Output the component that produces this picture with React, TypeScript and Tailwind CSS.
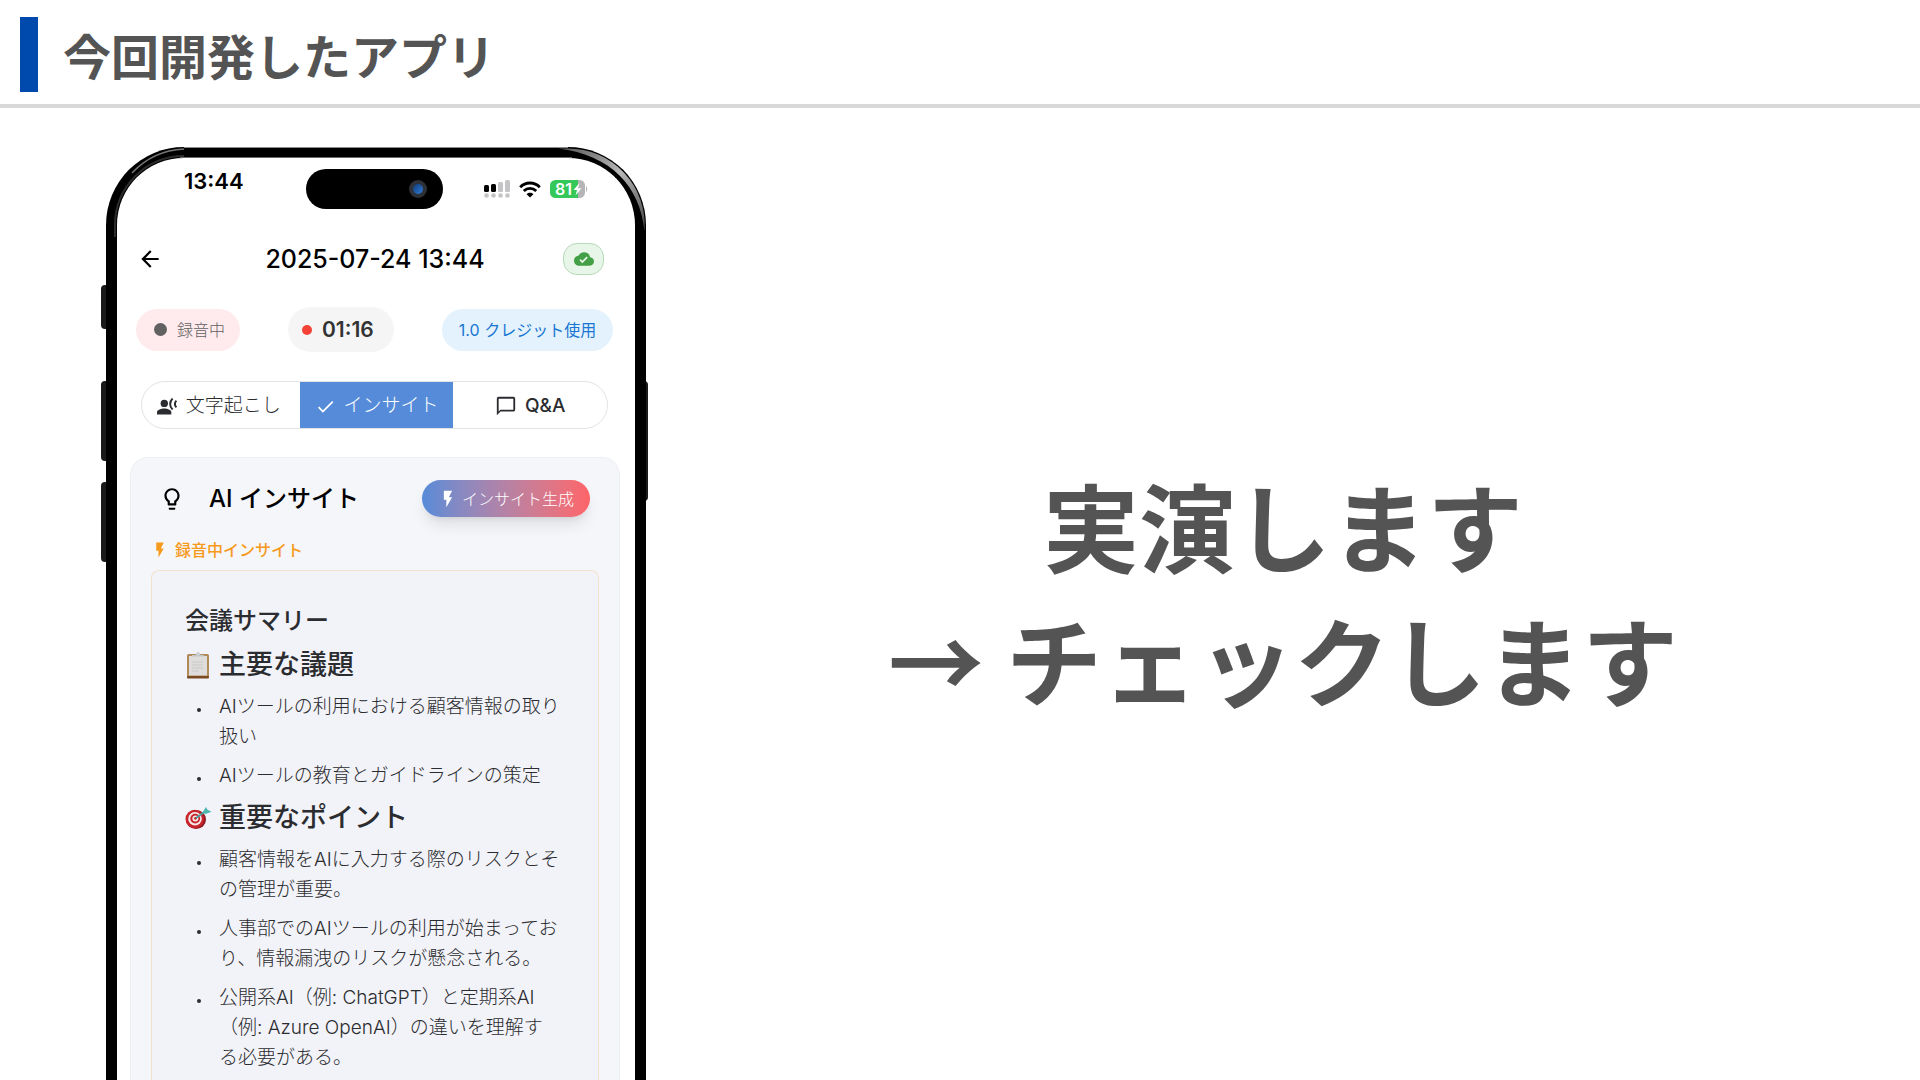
import type { ReactNode } from 'react'
import { MdArrowBack, MdCheck, MdCloudDone, MdFlashOn, MdOutlineChatBubbleOutline, MdOutlineLightbulb } from 'react-icons/md'

const topics = ['AIツールの利用における顧客情報の取り扱い', 'AIツールの教育とガイドラインの策定']

const points = [
  '顧客情報をAIに入力する際のリスクとその管理が重要。',
  '人事部でのAIツールの利用が始まっており、情報漏洩のリスクが懸念される。',
  '公開系AI（例: ChatGPT）と定期系AI（例: Azure OpenAI）の違いを理解する必要がある。',
]

function SignalIcon() {
  return (
    <svg viewBox="0 0 26 18" className="w-[26px] h-[18px]">
      <g fill="#000">
        <rect x="0" y="5" width="5" height="7" rx="1.5" />
        <rect x="7" y="4" width="5" height="8" rx="1.5" />
      </g>
      <g fill="#c4c4c6">
        <rect x="14" y="2" width="5" height="10" rx="1.5" />
        <rect x="21" y="0" width="5" height="12" rx="1.5" />
        <circle cx="2.5" cy="15.5" r="2.3" />
        <circle cx="9.5" cy="15.5" r="2.3" />
        <circle cx="16.5" cy="15.5" r="2.3" />
        <circle cx="23.5" cy="15.5" r="2.3" />
      </g>
    </svg>
  )
}

function WifiIcon() {
  return (
    <svg viewBox="0 0 22 17" className="w-[22px] h-[17px]" fill="none" stroke="#000" strokeWidth="2.8">
      <path d="M1.2 6.2C6.6 .6 15.4 .6 20.8 6.2" />
      <path d="M4.8 10C8.3 6.4 13.7 6.4 17.2 10" />
      <path d="M11 16.6 7.6 13.2C9.5 11.3 12.5 11.3 14.4 13.2Z" fill="#000" stroke="none" />
    </svg>
  )
}

function BatteryIcon() {
  return (
    <svg viewBox="0 0 38 18" className="w-[38px] h-[18px]">
      <path d="M5.5 0H28V18H5.5A5.5 5.5 0 0 1 0 12.5V5.5A5.5 5.5 0 0 1 5.5 0Z" fill="#34c759" />
      <path d="M28 0H29.5A5.5 5.5 0 0 1 35 5.5V12.5A5.5 5.5 0 0 1 29.5 18H28Z" fill="#b5b5b8" />
      <path d="M36 6C37.6 7 37.6 11 36 12Z" fill="#b5b5b8" />
      <text x="5" y="14.5" fill="#fff" fontSize="16" fontWeight="600" fontFamily="Inter, sans-serif">81</text>
      <path d="M29.5 3 23.5 10H27L25.5 15.5 31.5 8.2H28Z" fill="#fff" />
    </svg>
  )
}

function SpeakerIcon() {
  return (
    <svg viewBox="0 0 21 17" className="w-[21px] h-[17px]">
      <circle cx="7.3" cy="5.4" r="3.7" fill="currentColor" />
      <path d="M0 16.5V14.3C0 11.8 4.5 10.6 7.3 10.6S14.3 11.8 14.3 14.3V16.5Z" fill="currentColor" />
      <path d="M15.6 .6C12.3 3.6 12.3 8.6 15.6 11.6M19.4 2.6C17.4 4.6 17.4 7.4 19.4 9.4" fill="none" stroke="currentColor" strokeWidth="2" />
    </svg>
  )
}

function ClipboardIcon() {
  return (
    <svg viewBox="0 0 24 28" className="w-6 h-7 shrink-0">
      <rect x="1" y="3" width="22" height="24" rx="1.5" fill="#b08a57" />
      <rect x="1" y="25" width="22" height="2.5" rx="1" fill="#7a4b22" />
      <rect x="3" y="5" width="18" height="19.5" fill="#dedddb" />
      <path d="M6 11H17M6 14H17M6 17H17M6 20H13" stroke="#c9c8c7" strokeWidth="1" />
      <path d="M6 5.5V4H9.5C10 1.5 14 1.5 14.5 4H18V5.5Z" fill="#c3c6c9" />
      <circle cx="12" cy="2.5" r="1.3" fill="none" stroke="#d0d3d6" />
    </svg>
  )
}

function TargetIcon() {
  return (
    <svg viewBox="0 0 27 24" className="w-[27px] h-6 shrink-0">
      <ellipse cx="11" cy="13.5" rx="10" ry="9.5" fill="#8c1820" />
      <circle cx="9.8" cy="13" r="9.3" fill="#c9242c" />
      <circle cx="10" cy="12.8" r="6.8" fill="#f3e9e7" />
      <circle cx="10.2" cy="12.6" r="4.9" fill="#c9242c" />
      <circle cx="10.4" cy="12.4" r="3" fill="#f3e9e7" />
      <circle cx="10.5" cy="12.3" r="1.4" fill="#c9242c" />
      <path d="M11 12 20 5.5" stroke="#47a3a0" strokeWidth="1.8" />
      <path d="M17.5 6.5 21 1 22.5 3.8 26.5 5.8 20.5 8Z" fill="#4fb5b0" />
    </svg>
  )
}

// light reflections on the metal frame
function FrameShine() {
  return (
    <svg viewBox="0 0 540 90" className="absolute left-0 top-0 w-[540px] h-[90px]">
      <defs>
        <linearGradient id="shine" x1="0" y1="0" x2="1" y2="1">
          <stop offset="0" stopColor="#555" />
          <stop offset=".5" stopColor="#b8b8b8" />
          <stop offset="1" stopColor="#444" />
        </linearGradient>
      </defs>
      <path d="M78 .5H462" stroke="#8a8a8a" />
      <path d="M74 10.5H466" stroke="#6b6b6b" />
      <path d="M452 1.5H462A76.5 76.5 0 0 1 538.5 84C534 40 506 8 452 1.5Z" fill="url(#shine)" />
      <path d="M26 26A76 76 0 0 1 78 2" fill="none" stroke="#777" strokeWidth="1.5" />
      <path d="M9 90V78A69 69 0 0 1 78 9" fill="none" stroke="#2c2c2c" strokeWidth="2" />
    </svg>
  )
}

function Section({ icon, title, items }: { icon: ReactNode; title: string; items: string[] }) {
  return (
    <section>
      <h3 className="flex items-center gap-2 h-[46px] text-[27px] font-medium whitespace-nowrap">
        <span className="flex w-[26px] justify-center">{icon}</span>
        {title}
      </h3>
      <ul className="flex flex-col gap-[9px] py-1">
        {items.map(item => (
          <li key={item} className="flex text-[19px] leading-[30px] font-light">
            <span className="ml-3 mr-[18px] mt-4 size-1 shrink-0 rounded-full bg-[#2b2c30]" />
            <span className="flex-1">{item}</span>
          </li>
        ))}
      </ul>
    </section>
  )
}

function Phone() {
  return (
    <div className="relative w-[540px] shrink-0">
      {/* side buttons */}
      <div className="absolute -left-[5px] top-[138px] w-2 h-[44px] rounded-l-sm bg-[#1a1a1a]" />
      <div className="absolute -left-[5px] top-[234px] w-2 h-[80px] rounded-l-sm bg-[#1a1a1a]" />
      <div className="absolute -left-[5px] top-[335px] w-2 h-[80px] rounded-l-sm bg-[#1a1a1a]" />
      <div className="absolute -right-[2px] top-[234px] w-2 h-[120px] rounded-r-sm bg-[#1a1a1a]" />

      <div className="relative rounded-t-[78px] border-x-[11px] border-t-[11px] border-black bg-white text-[#2b2c30]">
        {/* status bar */}
        <div className="flex h-[74px] items-start pl-[67px] pr-[47px] pt-[11px]">
          <span className="w-[122px] pt-px text-[22px] leading-[22px] font-semibold text-black">13:44</span>
          <div className="flex h-10 w-[137px] items-center justify-end rounded-full bg-black pr-4">
            <span className="flex size-[18px] items-center justify-center rounded-full bg-[#2e3238]">
              <span className="size-[10px] rounded-full bg-linear-to-br from-[#123a7a] to-[#2f7fd8]" />
            </span>
          </div>
          <div className="ml-auto flex items-center gap-[9px] pt-[11px]">
            <SignalIcon />
            <WifiIcon />
            <BatteryIcon />
          </div>
        </div>

        {/* app bar */}
        <div className="flex h-[54px] items-center justify-between pl-5 pr-[31px]">
          <button aria-label="戻る" className="text-[26px] text-black">
            <MdArrowBack />
          </button>
          <h2 className="pl-6 pt-0.5 text-[25px] font-medium text-black">2025-07-24 13:44</h2>
          <span className="flex h-8 w-[41px] items-center justify-center rounded-[14px] border border-[#b5dab7] bg-[#e8f5e9] text-[20px] text-[#43a047]">
            <MdCloudDone />
          </span>
        </div>

        {/* recording status */}
        <div className="flex items-center justify-between pl-[19px] pr-[22px] pt-[21px]">
          <span className="flex h-[42px] w-[104px] items-center gap-[10px] rounded-full bg-[#ffebee] pl-[18px] text-base font-light text-[#616161]">
            <span className="size-[13px] rounded-full bg-[#616161]" />
            録音中
          </span>
          <span className="flex h-[45px] w-[106px] items-center gap-[10px] rounded-full bg-[#f5f5f5] pl-[14px] text-[21px] font-semibold text-[#333]">
            <span className="size-[10px] rounded-full bg-[#f44336]" />
            01:16
          </span>
          <span className="flex h-[42px] w-[171px] items-center justify-center rounded-full bg-[#e3f2fd] text-base text-[#1976d2]">1.0 クレジット使用</span>
        </div>

        {/* tabs */}
        <div className="ml-6 mr-[27px] mt-[29px] flex h-12 overflow-hidden rounded-full border border-[#e2e3e6] text-[19px]">
          <button className="flex flex-1 items-center justify-center gap-2 whitespace-nowrap pr-1 pt-0.5 font-light">
            <SpeakerIcon />
            文字起こし
          </button>
          <button className="flex flex-1 items-center justify-center gap-2 bg-[#558bd8] pt-0.5 font-light text-white">
            <MdCheck className="size-[21px]" />
            インサイト
          </button>
          <button className="flex flex-1 items-center justify-center gap-2 pt-0.5 font-medium">
            <MdOutlineChatBubbleOutline className="size-[22px]" />
            Q&amp;A
          </button>
        </div>

        {/* insight card */}
        <div className="ml-[13px] mr-[15px] mt-7 rounded-t-[18px] border-x border-t border-[#eeeff3] bg-[#f5f6fa] px-5">
          <div className="flex items-center justify-between pl-2 pr-[9px] pt-[22px]">
            <h2 className="flex items-center gap-6 text-[24px] leading-[37px] font-medium text-black">
              <MdOutlineLightbulb className="size-[26px]" />
              AI インサイト
            </h2>
            <button className="flex h-[37px] w-[168px] items-center justify-center gap-1 rounded-full bg-linear-to-r from-[#558bd8] to-[#ff6468] text-base font-light text-white shadow-lg">
              <MdFlashOn className="size-5" />
              インサイト生成
            </button>
          </div>
          <p className="mb-[7px] mt-5 flex h-[26px] items-center gap-[6px] text-base font-medium text-[#f79a1c]">
            <MdFlashOn className="size-[18px]" />
            録音中インサイト
          </p>
          <div className="h-[900px] rounded-t-lg border-x border-t border-[#f2e2cb] bg-[#f2f3f8] pl-[33px] pr-[37px] pt-[29px]">
            <h3 className="text-[24px] leading-[42px] font-medium">会議サマリー</h3>
            <Section icon={<ClipboardIcon />} title="主要な議題" items={topics} />
            <Section icon={<TargetIcon />} title="重要なポイント" items={points} />
          </div>
        </div>
      </div>
      <FrameShine />
    </div>
  )
}

export default function App() {
  return (
    <div lang="ja" className="flex h-screen flex-col overflow-hidden bg-white font-[Inter,'Noto_Sans_CJK_JP',sans-serif]">
      <header className="flex h-[108px] shrink-0 items-center gap-[25px] border-b-4 border-[#d9d9d9] pl-5 pt-1 font-['Noto_Sans_CJK_JP',sans-serif]">
        <span className="h-[75px] w-[18px] bg-[#004aad]" />
        <h1 className="text-[48px] font-bold text-[#545454]">今回開発したアプリ</h1>
      </header>
      <main className="flex min-h-0 flex-1 pl-[106px] pt-[39px]">
        <Phone />
        <div className="-mt-[45px] flex flex-1 items-center justify-center">
          <p className="text-center font-['Noto_Sans_CJK_JP',sans-serif] text-[96px] leading-[134px] font-bold text-[#545454]">
            実演します
            <br />
            → チェックします
          </p>
        </div>
      </main>
    </div>
  )
}
